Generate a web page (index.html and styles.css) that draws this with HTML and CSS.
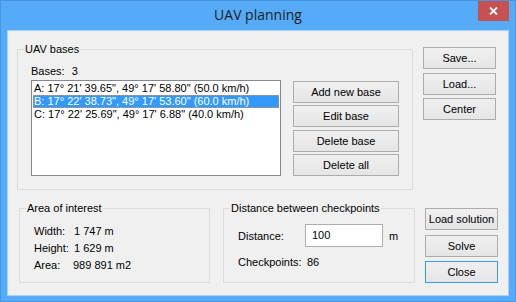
FILE: index.html
```html
<!DOCTYPE html>
<html>
<head>
<meta charset="utf-8">
<title>UAV planning</title>
<link rel="stylesheet" href="styles.css">
</head>
<body>
<div class="window">
  <div class="titlebar">
    <div class="title">UAV planning</div>
    <div class="close">
      <svg width="9" height="8" viewBox="0 0 9 8"><path d="M1 0.5 L8 7.5 M8 0.5 L1 7.5" stroke="#fff" stroke-width="1.8" fill="none"/></svg>
    </div>
  </div>
  <div class="client">
    <div class="row-top">
      <fieldset class="group group-bases">
        <legend>UAV bases</legend>
        <div class="bases-body">
          <div class="count-label"><span>Bases:</span><span class="count">3</span></div>
          <ul class="listbox">
            <li>A: 17° 21' 39.65", 49° 17' 58.80" (50.0 km/h)</li>
            <li class="selected">B: 17° 22' 38.73", 49° 17' 53.60" (60.0 km/h)</li>
            <li>C: 17° 22' 25.69", 49° 17' 6.88" (40.0 km/h)</li>
          </ul>
          <div class="base-buttons">
            <button class="btn">Add new base</button>
            <button class="btn">Edit base</button>
            <button class="btn">Delete base</button>
            <button class="btn">Delete all</button>
          </div>
        </div>
      </fieldset>
      <div class="side-buttons side-top">
        <button class="btn">Save...</button>
        <button class="btn">Load...</button>
        <button class="btn">Center</button>
      </div>
    </div>
    <div class="row-bottom">
      <fieldset class="group group-area">
        <legend>Area of interest</legend>
        <div class="area-body">
          <div class="kv"><span class="k">Width:</span><span>1 747 m</span></div>
          <div class="kv"><span class="k">Height:</span><span>1 629 m</span></div>
          <div class="kv"><span class="k">Area:</span><span class="area-val">989 891 m2</span></div>
        </div>
      </fieldset>
      <fieldset class="group group-dist">
        <legend>Distance between checkpoints</legend>
        <div class="dist-body">
          <div class="dist-row">
            <span class="dk">Distance:</span>
            <input class="textbox" type="text" value="100">
            <span class="unit">m</span>
          </div>
          <div class="cp-row"><span class="dk">Checkpoints:</span><span class="cp-val">86</span></div>
        </div>
      </fieldset>
      <div class="side-buttons side-bottom">
        <button class="btn">Load solution</button>
        <button class="btn">Solve</button>
        <button class="btn btn-default">Close</button>
      </div>
    </div>
  </div>
</div>
</body>
</html>
```

FILE: styles.css
```css
html, body {
  margin: 0;
  padding: 0;
  background: #ffffff;
}

.window {
  width: 516px;
  height: 302px;
  box-sizing: border-box;
  border: 1px solid #4596e0;
  background: #55abf7;
  display: flex;
  flex-direction: column;
  font-family: "Liberation Sans", Arial, sans-serif;
  font-size: 11px;
  color: #000;
}

.titlebar {
  flex: none;
  height: 29px;
  display: grid;
  grid-template-columns: 1fr auto 1fr;
}

.title {
  grid-column: 2;
  font-family: "Open Sans", sans-serif;
  font-size: 14px;
  line-height: 19px;
  padding-top: 4px;
  color: #1e1e1e;
}

.close {
  grid-column: 3;
  justify-self: end;
  align-self: start;
  margin-right: 6px;
  width: 31px;
  height: 20px;
  background: #c75050;
  display: flex;
  align-items: center;
  justify-content: center;
}

.close svg {
  display: block;
}

.client {
  flex: none;
  margin: 0 6px;
  height: 266px;
  box-sizing: border-box;
  border: 1px solid #a8d2fa;
  background: #f0f0f0;
}

.row-top {
  display: flex;
  align-items: flex-start;
  margin-top: 12px;
  padding-left: 9px;
}

.row-bottom {
  display: flex;
  align-items: flex-start;
  margin-top: 12px;
  padding-left: 11px;
}

.group {
  margin: 0;
  padding: 0;
  border: 1px solid #dcdcdc;
  box-sizing: border-box;
  min-inline-size: 0;
}

.group legend {
  margin-left: 6px;
  padding: 0 1px;
  line-height: 13px;
  font-size: 11px;
}

.group-bases {
  width: 396px;
  height: 147px;
}

.bases-body {
  display: grid;
  grid-template-columns: 250px 106px;
  column-gap: 12px;
  padding: 9px 0 0 13px;
}

.count-label {
  grid-column: 1 / 3;
  line-height: 13px;
  padding-left: 0;
}

.count {
  margin-left: 7px;
}

.listbox {
  grid-column: 1;
  margin: 2px 0 0 0;
  padding: 1px;
  list-style: none;
  width: 250px;
  height: 96px;
  box-sizing: border-box;
  border: 1px solid #828790;
  background: #fff;
}

.listbox li {
  height: 13px;
  line-height: 13px;
  padding-left: 1px;
  white-space: nowrap;
}

.listbox li.selected {
  background: #3399ff;
  color: #fff;
  outline: 1px dotted #e0904a;
  outline-offset: -1px;
}

.base-buttons {
  grid-column: 2;
  margin-top: 3px;
  display: flex;
  flex-direction: column;
  gap: 2.4px;
}

.btn {
  font-family: inherit;
  font-size: 11px;
  color: #000;
  height: 22px;
  box-sizing: border-box;
  border: 1px solid #acacac;
  background: linear-gradient(#f0f0f0, #e5e5e5);
  padding: 0;
  margin: 0;
  line-height: 20px;
  border-radius: 0;
}

.btn-default {
  border-color: #3399ff;
}

.side-buttons {
  display: flex;
  flex-direction: column;
  width: 73px;
  margin-left: 10px;
}

.side-top {
  margin-top: 4px;
  gap: 3.6px;
}

.side-bottom {
  margin-top: 6px;
  gap: 4.6px;
}

.group-area {
  width: 191px;
  height: 81px;
}

.area-body {
  padding: 8px 0 0 14px;
}

.kv {
  display: flex;
  line-height: 17px;
}

.kv .k {
  width: 40px;
}

.area-val {
  margin-left: -1px;
}

.group-dist {
  width: 192px;
  height: 81px;
  margin-left: 13px;
}

.dist-body {
  padding: 9px 0 0 14px;
}

.dist-row {
  display: flex;
  align-items: center;
  height: 23px;
}

.dk {
  width: 67px;
  flex: none;
}

.textbox {
  width: 78px;
  height: 23px;
  box-sizing: border-box;
  border: 1px solid #abadb3;
  background: #fff;
  padding: 0 0 2px 6px;
  margin: 0;
  font-family: inherit;
  font-size: 11px;
  color: #000;
  outline: none;
}

.unit {
  margin-left: 6px;
}

.cp-row {
  display: flex;
  margin-top: 9px;
  line-height: 13px;
}

.cp-val {
  padding-left: 2px;
}
```
